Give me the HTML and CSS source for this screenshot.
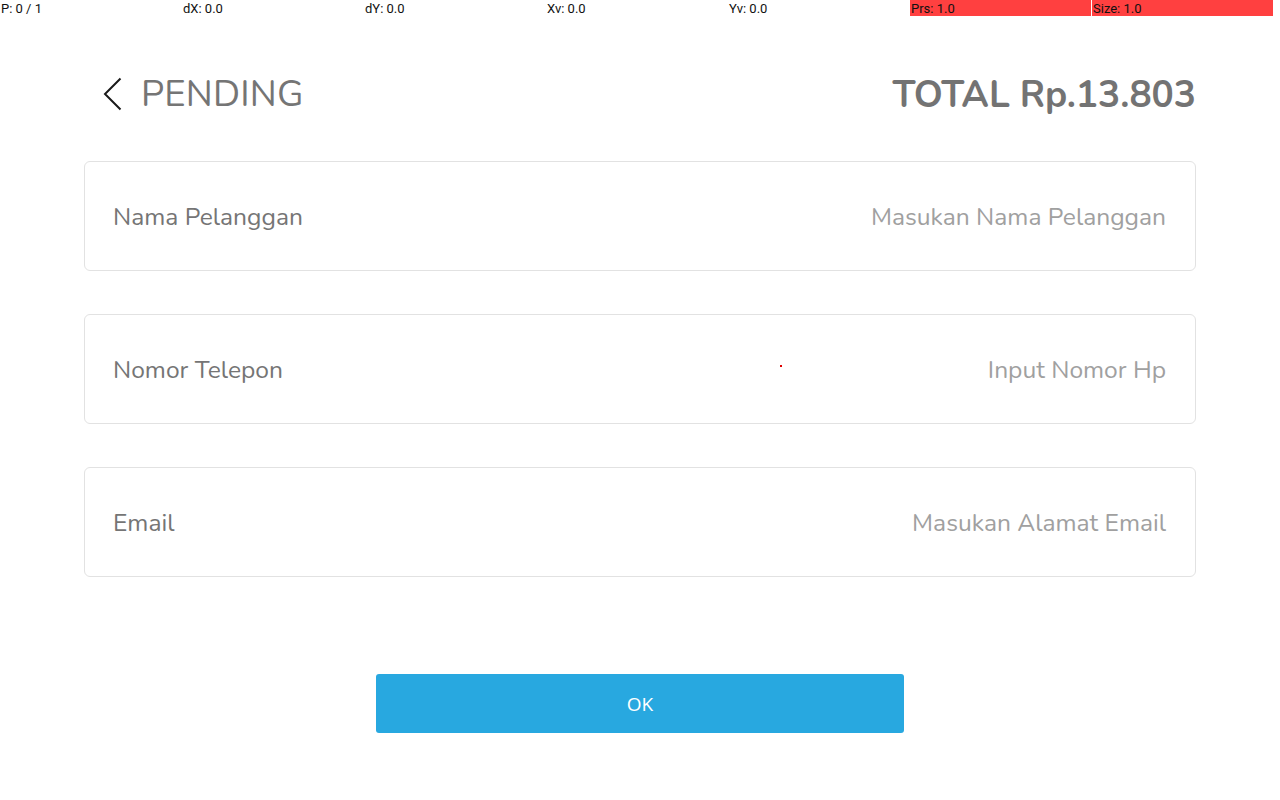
FILE: index.html
```html
<!DOCTYPE html>
<html>
<head>
<meta charset="utf-8">
<link rel="stylesheet" href="styles.css">
</head>
<body>
<div class="pointer-bar">
  <div class="cell">P: 0 / 1</div>
  <div class="cell">dX: 0.0</div>
  <div class="cell">dY: 0.0</div>
  <div class="cell">Xv: 0.0</div>
  <div class="cell">Yv: 0.0</div>
  <div class="cell red">Prs: 1.0</div>
  <div class="cell red">Size: 1.0</div>
</div>
<div class="touch-dot"></div>
<main class="page">
  <header class="header">
    <div class="title">
      <svg class="back" width="20" height="34" viewBox="0 0 20 34"><path d="M18.5 1.5 L3 17 L18.5 32.5" fill="none" stroke="#1a1a1a" stroke-width="2"/></svg>
      <span class="title-text">PENDING</span>
    </div>
    <div class="total">TOTAL Rp.13.803</div>
  </header>
  <section class="fields">
    <div class="field"><span class="label">Nama Pelanggan</span><span class="placeholder">Masukan Nama Pelanggan</span></div>
    <div class="field"><span class="label">Nomor Telepon</span><span class="placeholder">Input Nomor Hp</span></div>
    <div class="field"><span class="label">Email</span><span class="placeholder">Masukan Alamat Email</span></div>
  </section>
  <div class="actions">
    <button class="ok">OK</button>
  </div>
</main>
</body>
</html>
```

FILE: styles.css
```css
html, body {
  margin: 0;
  padding: 0;
  background: #ffffff;
}
body {
  width: 1280px;
  height: 800px;
  position: relative;
  overflow: hidden;
  font-family: "Nunito", "Lato", "Noto Sans", sans-serif;
}
.pointer-bar {
  display: grid;
  grid-template-columns: repeat(7, 181px);
  column-gap: 1px;
  height: 16px;
  font-family: Roboto, "Liberation Sans", sans-serif;
  font-size: 13px;
  line-height: 17px;
  color: #111;
}
.cell {
  padding-left: 1px;
  white-space: nowrap;
  overflow: hidden;
}
.red {
  background: #ff4040;
}
.touch-dot {
  position: absolute;
  left: 780px;
  top: 365px;
  width: 2px;
  height: 2px;
  background: #e00000;
}
.page {
  width: 1112px;
  margin: 0 auto;
}
.header {
  display: flex;
  justify-content: space-between;
  align-items: center;
  height: 60px;
  margin-top: 48px;
  padding: 0 0 0 18px;
}
.title {
  display: flex;
  align-items: center;
  gap: 19px;
}
.back {
  display: block;
}
.title-text {
  font-size: 36.5px;
  color: #757575;
  letter-spacing: 0.2px;
}
.total {
  font-size: 37px;
  font-weight: 700;
  color: #737373;
  padding-top: 2px;
}
.fields {
  display: flex;
  flex-direction: column;
  gap: 43px;
  margin-top: 37px;
}
.field {
  display: flex;
  justify-content: space-between;
  align-items: center;
  height: 106px;
  border: 1px solid #e2e2e2;
  border-radius: 6px;
  padding: 2px 29px 0 28px;
  box-sizing: content-box;
  font-size: 24.6px;
}
.label {
  color: #757575;
}
.placeholder {
  color: #a0a0a0;
}
.actions {
  display: flex;
  justify-content: center;
  margin-top: 97px;
}
.ok {
  width: 528px;
  height: 59px;
  border: none;
  border-radius: 3px;
  background: #28a8e0;
  color: #ffffff;
  font-family: "Open Sans", "Noto Sans", sans-serif;
  font-size: 19px;
  padding: 0;
}
```
